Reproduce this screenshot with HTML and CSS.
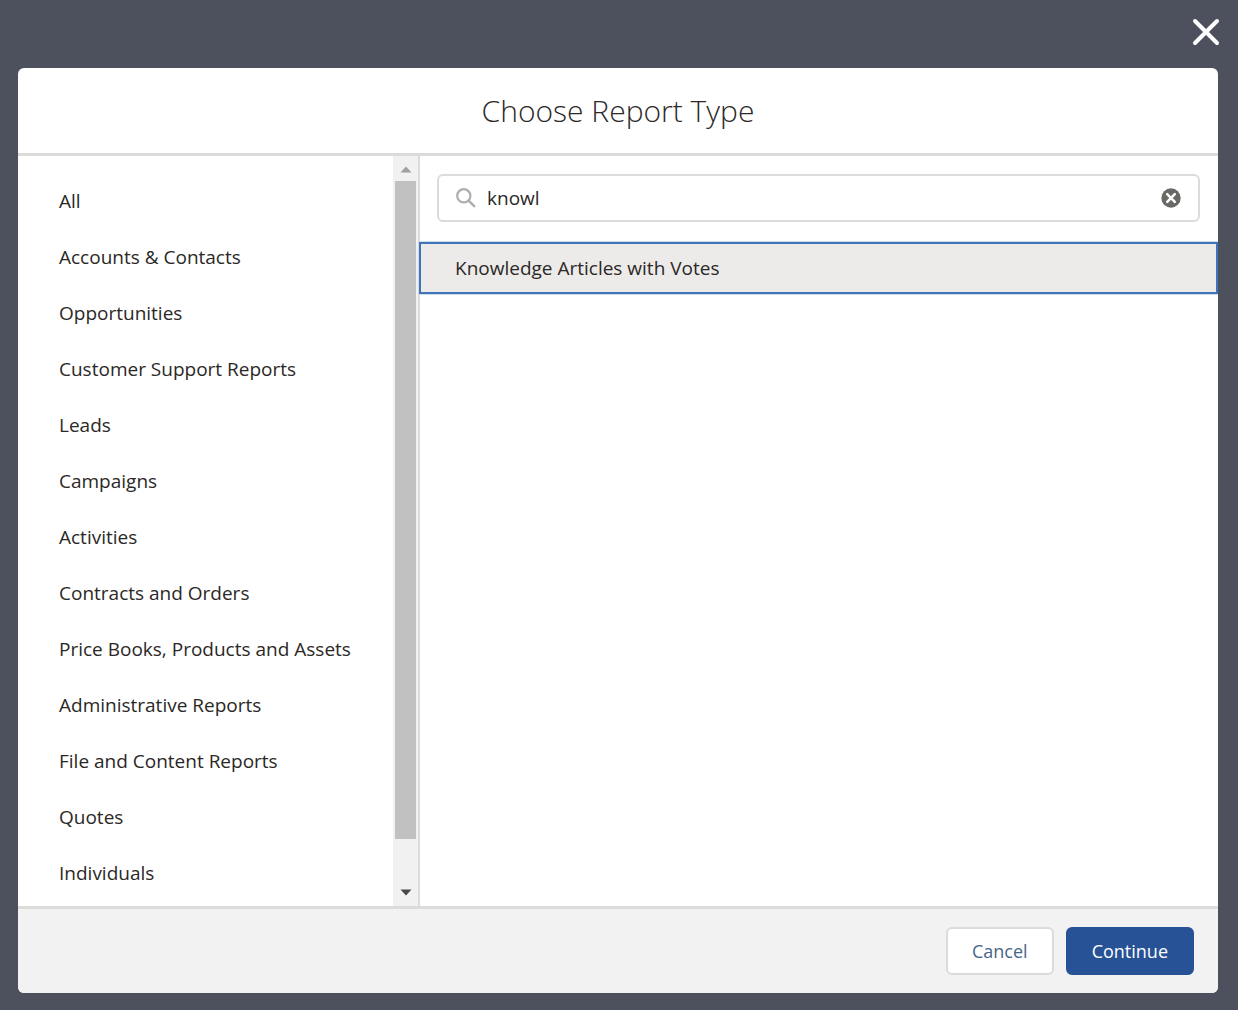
FILE: index.html
```html
<!DOCTYPE html>
<html lang="en">
<head>
  <meta charset="UTF-8">
  <meta name="viewport" content="width=device-width, initial-scale=1">
  <title>Choose Report Type</title>
  <link rel="stylesheet" href="styles.css">
</head>
<body>

<div class="backdrop">
  <div class="close-row">
    <button type="button" class="btn-close" aria-label="Close">
      <svg viewBox="0 0 28 28" width="28" height="28" aria-hidden="true">
        <path d="M3 3L25 25M25 3L3 25" fill="none" stroke="#fff" stroke-width="4" stroke-linecap="round"/>
      </svg>
    </button>
  </div>

  <section class="modal" role="dialog" aria-labelledby="modalTitle">
    <header class="modal-header">
      <h1 id="modalTitle">Choose Report Type</h1>
    </header>

    <div class="modal-body">
      <!-- Report categories -->
      <nav class="sidebar" aria-label="Report categories">
        <ul class="category-list">
          <li><a href="#">All</a></li>
          <li><a href="#">Accounts &amp; Contacts</a></li>
          <li><a href="#">Opportunities</a></li>
          <li><a href="#">Customer Support Reports</a></li>
          <li><a href="#">Leads</a></li>
          <li><a href="#">Campaigns</a></li>
          <li><a href="#">Activities</a></li>
          <li><a href="#">Contracts and Orders</a></li>
          <li><a href="#">Price Books, Products and Assets</a></li>
          <li><a href="#">Administrative Reports</a></li>
          <li><a href="#">File and Content Reports</a></li>
          <li><a href="#">Quotes</a></li>
          <li><a href="#">Individuals</a></li>
        </ul>
        <div class="scrollbar" aria-hidden="true">
          <svg class="scroll-arrow" viewBox="0 0 12 7" width="12" height="7"><path d="M6 0.5L11.5 6.5H0.5Z" fill="#a0a0a0"/></svg>
          <div class="scroll-track"><div class="scroll-thumb"></div></div>
          <svg class="scroll-arrow" viewBox="0 0 12 7" width="12" height="7"><path d="M0.5 0.5H11.5L6 6.5Z" fill="#484848"/></svg>
        </div>
      </nav>

      <!-- Search and results -->
      <div class="results">
        <div class="search-box">
          <svg viewBox="0 0 20 20" width="20" height="20" aria-hidden="true">
            <circle cx="7.8" cy="7.8" r="6.6" fill="none" stroke="#b0adab" stroke-width="2.2"/>
            <path d="M12.6 12.6L18.2 18.2" fill="none" stroke="#b0adab" stroke-width="2.4" stroke-linecap="round"/>
          </svg>
          <input type="text" value="knowl" aria-label="Search report types">
          <button type="button" class="btn-clear" aria-label="Clear search">
            <svg viewBox="0 0 20 20" width="20" height="20" aria-hidden="true">
              <circle cx="10" cy="10" r="9.7" fill="#6b6966"/>
              <path d="M6.2 6.2L13.8 13.8M13.8 6.2L6.2 13.8" fill="none" stroke="#fff" stroke-width="2.5" stroke-linecap="round"/>
            </svg>
          </button>
        </div>
        <ul class="report-list">
          <li><a href="#" class="selected">Knowledge Articles with Votes</a></li>
        </ul>
      </div>
    </div>

    <footer class="modal-footer">
      <button type="button" class="btn">Cancel</button>
      <button type="button" class="btn btn-primary">Continue</button>
    </footer>
  </section>
</div>

</body>
</html>
```

FILE: styles.css
```css
* {
  box-sizing: border-box;
}
body {
  margin: 0;
  font-family: "Open Sans", "Noto Sans", sans-serif;
  font-size: 19px;
  line-height: 28px;
  color: #2b2826;
  background: #4d515d;
}
a {
  color: inherit;
  text-decoration: none;
}
ul {
  list-style: none;
  margin: 0;
  padding: 0;
}
button,
input {
  font: inherit;
}

/* Backdrop */
.backdrop {
  display: flex;
  flex-direction: column;
  height: 100vh;
  padding: 0 18px 17px;
}
.close-row {
  display: flex;
  justify-content: flex-end;
  padding: 18px 0 22px;
}
.btn-close,
.btn-clear {
  display: flex;
  padding: 0;
  border: 0;
  background: none;
  cursor: pointer;
}

/* Modal */
.modal {
  flex: 1;
  min-height: 0;
  display: flex;
  flex-direction: column;
  overflow: hidden;
  margin-right: 2px;
  border-radius: 6px;
  background: #fff;
}
.modal-header {
  padding: 22px 24px;
  border-bottom: 3px solid #dddbda;
  text-align: center;
}
.modal-header h1 {
  margin: 0;
  font-size: 30px;
  font-weight: 300;
  line-height: 41px;
}
.modal-body {
  flex: 1;
  min-height: 0;
  display: flex;
}

/* Categories */
.sidebar {
  flex: 0 0 402px;
  display: flex;
  border-right: 2px solid #dddbda;
}
.category-list {
  flex: 1;
  overflow: hidden;
  padding-top: 17px;
}
.category-list a {
  display: block;
  padding: 14px 0 14px 41px;
}
.scrollbar {
  width: 25px;
  display: flex;
  flex-direction: column;
  align-items: center;
  gap: 8px;
  padding: 10px 2px;
  background: #f1f1f1;
}
.scroll-arrow {
  flex: none;
}
.scroll-track {
  flex: 1;
  align-self: stretch;
}
.scroll-thumb {
  height: 94%;
  background: #c1c1c1;
}

/* Results */
.results {
  flex: 1;
  min-width: 0;
}
.search-box {
  display: flex;
  align-items: center;
  gap: 11px;
  height: 48px;
  margin: 18px 18px 20px 17px;
  padding: 0 17px;
  border: 2px solid #dddbda;
  border-radius: 6px;
}
.search-box input {
  flex: 1;
  min-width: 0;
  padding: 0;
  border: 0;
  outline: 0;
  background: none;
  color: inherit;
}
.report-list {
  margin-left: -1px;
}
.report-list a {
  display: block;
  padding: 10px 34px;
  border: 2px solid transparent;
}
.report-list .selected {
  border-color: #3f74b8;
  background: #ecebea;
  box-shadow: 0 0 0 1px #cfdcee;
}

/* Footer */
.modal-footer {
  display: flex;
  justify-content: flex-end;
  gap: 12px;
  padding: 18px 24px;
  border-top: 3px solid #dddbda;
  background: #f3f2f2;
}
.btn {
  height: 48px;
  padding: 0 24px;
  border: 2px solid #dddbda;
  border-radius: 6px;
  background: #fff;
  color: #4a6488;
  font-size: 18px;
  cursor: pointer;
}
.btn-primary {
  border-color: #275296;
  background: #275296;
  color: #fff;
  font-weight: 500;
}
```
